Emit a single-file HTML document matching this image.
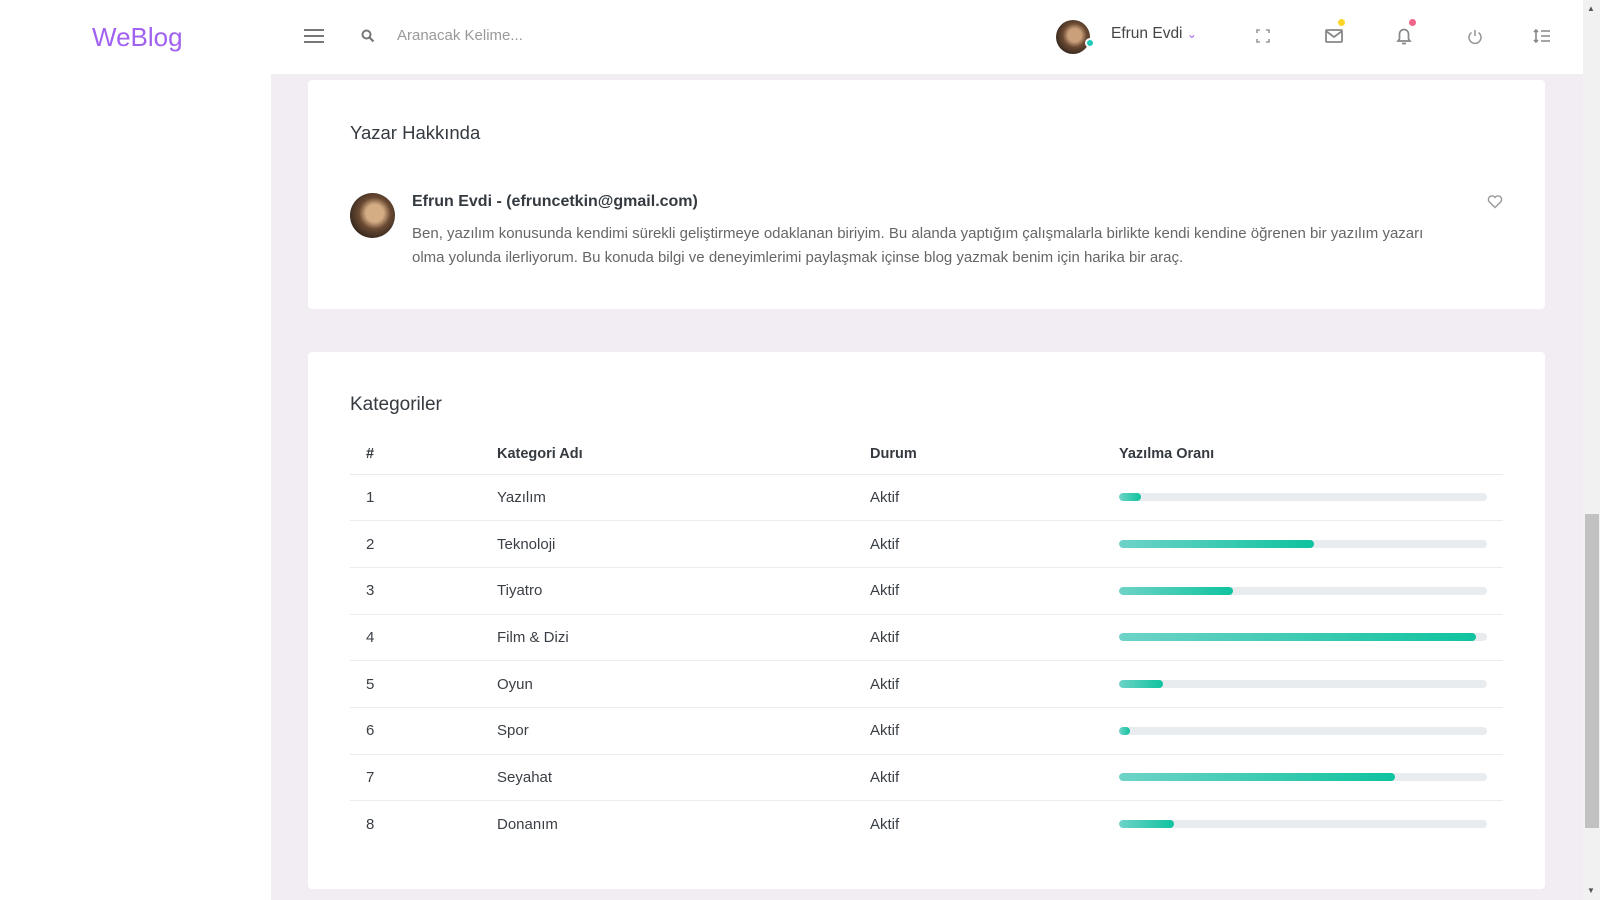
<!DOCTYPE html>
<html><head><meta charset="utf-8"><style>
*{box-sizing:border-box;margin:0;padding:0}
body{width:1600px;height:900px;overflow:hidden;background:#f1edf3;font-family:"Liberation Sans",sans-serif;color:#343a40;position:relative}
.side{position:absolute;left:0;top:0;width:271px;height:900px;background:#fff}
.head{position:absolute;left:0;top:0;width:1583px;height:74px;background:#fff}
.logo{position:absolute;left:92px;top:22px;font-size:26px;color:#a162f0}
.card{position:absolute;left:308px;width:1237px;background:#fff;border-radius:4px}
.abs{position:absolute}
.sb{position:absolute;left:1583px;top:0;width:17px;height:900px;background:#f1f1f1}
.thumb{position:absolute;left:1585px;top:514px;width:14px;height:314px;background:#c1c1c1}
table{border-collapse:collapse;position:absolute;left:42px;top:434px;width:1153px;font-size:15px}
th{text-align:left;font-weight:bold;height:40px;border-bottom:1px solid #e9e9ee;color:#343a40;font-size:14.5px}
td{height:46.7px;border-bottom:1px solid #ececf0;color:#3a3f45}
tr:last-child td{border-bottom:none}
.tr{width:368px;height:8px;background:#e9ecef;border-radius:4px;overflow:hidden}
.fl{height:8px;border-radius:4px;background:linear-gradient(90deg,#6ed3c8,#0fc39f)}
.ic{position:absolute;top:24px}
</style></head><body>
<div class="side"></div>
<div class="head">
 <div class="logo">WeBlog</div>
 <div class="abs" style="left:304px;top:29px;width:20px;height:2px;background:#777;box-shadow:0 6px 0 #777,0 12px 0 #777"></div>
 <svg class="abs" style="left:361px;top:29px" width="14" height="14" viewBox="0 0 14 14"><circle cx="5.5" cy="5.5" r="4" fill="none" stroke="#777" stroke-width="2"/><path d="M8.5 8.5l4 4" stroke="#777" stroke-width="2.2"/></svg>
 <div class="abs" style="left:397px;top:27px;font-size:15px;color:#999">Aranacak Kelime...</div>
 <div class="abs" style="left:1056px;top:20px;width:34px;height:34px;border-radius:50%;background:radial-gradient(circle at 55% 45%,#c9a07a 0 25%,#6b4a33 45%,#2b2119 80%)"></div>
 <div class="abs" style="left:1085px;top:38px;width:10px;height:10px;border-radius:50%;background:#1dc9b7;border:2px solid #fff"></div>
 <div class="abs" style="left:1111px;top:25px;font-size:15.5px;color:#444">Efrun Evdi <span style="color:#a162f0;font-size:12px">&#8964;</span></div>
 <svg class="ic" style="left:1255px" width="16" height="24" viewBox="0 0 16 24"><path d="M2 9V6h3M11 6h3v3M14 15v3h-3M5 18H2v-3" fill="none" stroke="#999" stroke-width="1.6"/></svg>
 <svg class="ic" style="left:1324px" width="20" height="24" viewBox="0 0 20 24"><rect x="2" y="6" width="16" height="12" rx="1" fill="none" stroke="#888" stroke-width="1.8"/><path d="M2 7l8 6 8-6" fill="none" stroke="#888" stroke-width="1.8"/></svg>
 <div class="abs" style="left:1338px;top:19px;width:7px;height:7px;border-radius:50%;background:#fdd428"></div>
 <svg class="ic" style="left:1394px" width="20" height="24" viewBox="0 0 20 24"><path d="M4 17h12l-1.5-2V10a4.5 4.5 0 0 0-9 0v5z M8 19.5h4" fill="none" stroke="#888" stroke-width="1.7"/></svg>
 <div class="abs" style="left:1409px;top:19px;width:7px;height:7px;border-radius:50%;background:#f0648a"></div>
 <svg class="ic" style="left:1466px" width="18" height="24" viewBox="0 0 18 24"><path d="M5.5 8.5a6 6 0 1 0 7 0M9 6v6" fill="none" stroke="#999" stroke-width="1.6"/></svg>
 <svg class="ic" style="left:1532px" width="20" height="24" viewBox="0 0 20 24"><path d="M4 6v12M2 8l2-2 2 2M2 16l2 2 2-2M9 7h9M9 12h9M9 17h9" fill="none" stroke="#888" stroke-width="1.6"/></svg>
</div>
<div class="card" style="top:80px;height:229px">
 <div class="abs" style="left:42px;top:42px;font-size:18.5px;color:#343a40">Yazar Hakkında</div>
 <div class="abs" style="left:42px;top:113px;width:45px;height:45px;border-radius:50%;background:radial-gradient(circle at 55% 45%,#d4ad85 0 25%,#6b4a33 45%,#2b2119 80%)"></div>
 <div class="abs" style="left:104px;top:113px;font-size:16px;font-weight:bold;color:#343a40">Efrun Evdi - (efruncetkin@gmail.com)</div>
 <div class="abs" style="left:104px;top:142px;width:1035px;font-size:15px;line-height:24px;color:#666">Ben, yazılım konusunda kendimi sürekli geliştirmeye odaklanan biriyim. Bu alanda yaptığım çalışmalarla birlikte kendi kendine öğrenen bir yazılım yazarı olma yolunda ilerliyorum. Bu konuda bilgi ve deneyimlerimi paylaşmak içinse blog yazmak benim için harika bir araç.</div>
 <svg class="abs" style="left:1179px;top:114px" width="16" height="15" viewBox="0 0 16 15"><path d="M8 13.5L2 7.5a3.3 3.3 0 0 1 6-4 3.3 3.3 0 0 1 6 4z" fill="none" stroke="#999" stroke-width="1.4"/></svg>
</div>
<div class="card" style="top:352px;height:537px">
 <div class="abs" style="left:42px;top:42px;font-size:19px;color:#343a40">Kategoriler</div>
</div>
<div class="abs" style="left:308px;top:0;width:1237px">
<table style="top:434px">
<tr><th style="width:147px;padding-left:16px">#</th><th style="width:373px">Kategori Adı</th><th style="width:249px">Durum</th><th>Yazılma Oranı</th></tr>
<tr><td style="padding-left:16px">1</td><td>Yazılım</td><td>Aktif</td><td><div class="tr"><div class="fl" style="width:6%"></div></div></td></tr>
<tr><td style="padding-left:16px">2</td><td>Teknoloji</td><td>Aktif</td><td><div class="tr"><div class="fl" style="width:53%"></div></div></td></tr>
<tr><td style="padding-left:16px">3</td><td>Tiyatro</td><td>Aktif</td><td><div class="tr"><div class="fl" style="width:31%"></div></div></td></tr>
<tr><td style="padding-left:16px">4</td><td>Film &amp; Dizi</td><td>Aktif</td><td><div class="tr"><div class="fl" style="width:97%"></div></div></td></tr>
<tr><td style="padding-left:16px">5</td><td>Oyun</td><td>Aktif</td><td><div class="tr"><div class="fl" style="width:12%"></div></div></td></tr>
<tr><td style="padding-left:16px">6</td><td>Spor</td><td>Aktif</td><td><div class="tr"><div class="fl" style="width:3%"></div></div></td></tr>
<tr><td style="padding-left:16px">7</td><td>Seyahat</td><td>Aktif</td><td><div class="tr"><div class="fl" style="width:75%"></div></div></td></tr>
<tr><td style="padding-left:16px">8</td><td>Donanım</td><td>Aktif</td><td><div class="tr"><div class="fl" style="width:15%"></div></div></td></tr>
</table>
</div>
<div class="sb"></div><div class="thumb"></div>
<div class="abs" style="left:1587px;top:4px;font-size:8px;color:#555">▲</div>
<div class="abs" style="left:1587px;top:886px;font-size:8px;color:#555">▼</div>
</body></html>
